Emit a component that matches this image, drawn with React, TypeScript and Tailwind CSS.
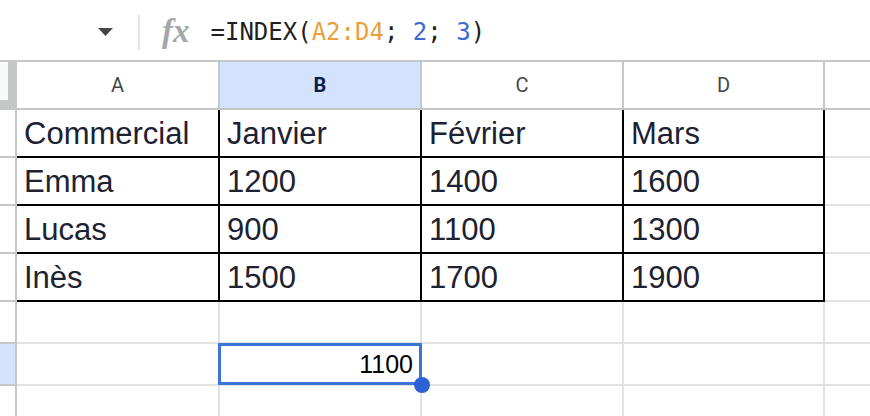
const colWidths = ["w-[203px]", "w-[202px]", "w-[202px]", "w-[201px]"];
const colLabels = ["A", "B", "C", "D"];

const table = [
  ["Commercial", "Janvier", "Février", "Mars"],
  ["Emma", "1200", "1400", "1600"],
  ["Lucas", "900", "1100", "1300"],
  ["Inès", "1500", "1700", "1900"],
];

function FormulaBar() {
  return (
    <div className="h-[60px] flex items-center pl-[98px]">
      <svg width="15" height="8" viewBox="0 0 15 8" className="mt-[4px]">
        <path d="M0 0 L15 0 L7.5 8 Z" fill="#444746" />
      </svg>
      <div className="ml-[25px] mt-[4px] w-[2px] h-[35px] bg-[#e3e3e3]" />
      <span className="ml-[22px] mt-[2px] font-['Liberation_Serif',serif] italic font-bold text-[33px] leading-none text-[#a3a7ab]">
        fx
      </span>
      <span className="ml-[21px] mt-[3px] font-['DejaVu_Sans_Mono',monospace] text-[24px] leading-none text-[#1f1f1f] whitespace-pre">
        =INDEX(<span className="text-[#e8a03c]">A2:D4</span>;{" "}
        <span className="text-[#3b6bd1]">2</span>;{" "}
        <span className="text-[#3b6bd1]">3</span>)
      </span>
    </div>
  );
}

function HeaderRow() {
  return (
    <div className="flex h-[50px] border-t-2 border-[#c7c7c7]">
      <div className="w-[17px] h-full bg-[#c4c7c5]">
        <div className="w-[8px] h-[38px] bg-[#f8f9fa]" />
      </div>
      {colLabels.map((l, i) => (
        <div
          key={l}
          className={`${colWidths[i]} h-full border-r-2 border-b-2 border-[#c4c7c5] flex items-center justify-center font-['Roboto',sans-serif] text-[20px] ${
            l === "B" ? "bg-[#d3e3fd] font-bold text-[#0b1d4a]" : "text-[#444746]"
          }`}
        >
          {l}
        </div>
      ))}
      <div className="flex-1 h-full border-b-2 border-[#c4c7c5]" />
    </div>
  );
}

function EmptyRow({ selected }: { selected?: boolean }) {
  return (
    <div className="flex h-[42px]">
      <div
        className={`w-[17px] h-full border-r-2 border-b-2 border-[#c4c7c5] ${
          selected ? "bg-[#d3e3fd]" : "bg-white"
        }`}
      />
      {colWidths.map((w, i) => (
        <div
          key={i}
          className={`${w} h-full border-r-2 border-b-2 border-[#e2e2e2] relative`}
        >
          {selected && i === 1 && (
            <>
              <div className="absolute -left-[2px] -top-[1px] w-[204px] h-[42px] border-[3px] border-[#3d74d8] z-10 flex items-center justify-end pr-[6px]">
                <span className="text-[25px] leading-none text-black">1100</span>
              </div>
              <div className="absolute left-[194px] top-[33px] w-[16px] h-[16px] rounded-full bg-[#2d62d6] z-20" />
            </>
          )}
        </div>
      ))}
      <div className="flex-1 h-full border-b-2 border-[#e2e2e2]" />
    </div>
  );
}

export default function App() {
  return (
    <div className="w-[870px] h-[416px] overflow-hidden bg-white font-['Liberation_Sans',sans-serif]">
      <FormulaBar />
      <HeaderRow />
      {table.map((row, r) => (
        <div key={r} className="flex h-[48px]">
          <div className="w-[17px] h-full border-r-2 border-b-2 border-[#c4c7c5] bg-white" />
          {row.map((cell, i) => (
            <div
              key={i}
              className={`${colWidths[i]} h-full border-r-2 border-b-2 border-black flex items-center pl-[7px] text-[31px] leading-none text-[#1c2232]`}
            >
              {cell}
            </div>
          ))}
          <div className="flex-1 h-full border-b-2 border-[#e2e2e2]" />
        </div>
      ))}
      <EmptyRow />
      <EmptyRow selected />
      <EmptyRow />
    </div>
  );
}
